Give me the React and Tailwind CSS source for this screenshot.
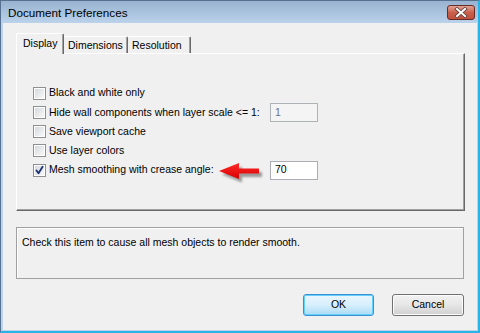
import React from "react";

function CheckBox({ checked }) {
  return (
    <div className="w-[13px] h-[13px] border border-[#8e8f8f] bg-white p-[1px] shrink-0">
      <div className="w-full h-full bg-gradient-to-br from-[#d5d9de] to-[#f8f8f8] relative">
        {checked && (
          <svg className="absolute left-[-1px] top-[-1px]" width="11" height="11" viewBox="0 0 11 11">
            <path d="M2.5 5.5 L4.5 8.2 L8.6 1.8" fill="none" stroke="#1b2f74" strokeWidth="1.8" strokeLinecap="round" strokeLinejoin="round" />
          </svg>
        )}
      </div>
    </div>
  );
}

function Row({ label, checked, input, disabled }) {
  return (
    <div className="h-[19.25px] flex items-center pl-[16px]">
      <CheckBox checked={checked} />
      <div className="ml-[3px] w-[221px] whitespace-nowrap">{label}</div>
      {input !== undefined && (
        <div
          className={
            disabled
              ? "w-[48px] h-[19px] border border-[#adb2b5] bg-[#f4f4f4] text-[#6d6d8a] pl-[4px] flex items-center"
              : "w-[48px] h-[19px] border border-[#abadb3] bg-white text-black pl-[4px] flex items-center"
          }
        >
          {input}
        </div>
      )}
    </div>
  );
}

export default function App() {
  return (
    <div className="w-[480px] h-[333px] bg-[#bcd3ea] border-t border-l border-[#56708f] border-r-2 border-b-2 border-r-[#2ab4e6] border-b-[#2ab4e6] flex flex-col overflow-hidden font-['Liberation_Sans',Arial,sans-serif] text-[10.5px] text-black">
      {/* Title bar */}
      <div className="h-[22px] shrink-0 bg-gradient-to-b from-[#98b2d0] to-[#bad2ea] flex items-center relative">
        <div className="pl-[7px] text-[11.7px] text-black pt-[1px]">Document Preferences</div>
        <div className="absolute left-[446px] top-[4px] w-[28px] h-[15px] rounded-[3px] border border-[#6a2a26] bg-gradient-to-b from-[#e2a293] via-[#c9604c] to-[#c0503c] flex items-center justify-center">
          <svg width="14" height="11" viewBox="0 0 14 11">
            <path d="M3 2 L11 9 M11 2 L3 9" stroke="#5a3b38" strokeWidth="3.6" strokeLinecap="square" />
            <path d="M3 2 L11 9 M11 2 L3 9" stroke="#ffffff" strokeWidth="2" strokeLinecap="square" />
          </svg>
        </div>
      </div>
      {/* Client */}
      <div className="flex-1 pl-[2px] pr-[1px] pb-[1px] flex">
        <div className="flex-1 bg-[#f0f0f0] flex flex-col">
          {/* Tabs */}
          <div className="mt-[10px] ml-[13px] h-[20px] flex items-end">
            <div className="relative z-10 -mb-px w-[48px] h-[21px] bg-[#f0f0f0] border-t border-l border-white border-r border-r-[#696969] rounded-t-[2px] shadow-[inset_-1px_0_0_#a0a0a0] pl-[6px] pt-[2px]">
              Display
            </div>
            <div className="w-[64px] h-[17px] bg-[#f0f0f0] border-t border-white border-r border-r-[#696969] rounded-t-[2px] shadow-[inset_-1px_0_0_#a0a0a0] pl-[4px] pt-[1px]">
              Dimensions
            </div>
            <div className="w-[63px] h-[17px] bg-[#f0f0f0] border-t border-white border-r border-r-[#696969] rounded-t-[2px] shadow-[inset_-1px_0_0_#a0a0a0] pl-[4px] pt-[1px]">
              Resolution
            </div>
          </div>
          {/* Panel */}
          <div className="relative ml-[13px] w-[449px] h-[158px] border-t border-l border-white border-r border-b border-r-[#696969] border-b-[#696969] shadow-[inset_-1px_-1px_0_#a0a0a0] pt-[29.5px]">
            <Row label="Black and white only" />
            <Row label="Hide wall components when layer scale <= 1:" input="1" disabled />
            <Row label="Save viewport cache" />
            <Row label="Use layer colors" />
            <Row label="Mesh smoothing with crease angle:" checked input="70" />
            <svg className="absolute left-[199px] top-[107px]" width="50" height="26" viewBox="0 0 50 26">
              <defs>
                <filter id="blur" x="-20%" y="-40%" width="140%" height="180%">
                  <feGaussianBlur stdDeviation="1.2" />
                </filter>
                <linearGradient id="red" x1="0" y1="0" x2="0" y2="1">
                  <stop offset="0" stopColor="#ff2a2a" />
                  <stop offset="1" stopColor="#d80000" />
                </linearGradient>
              </defs>
              <polygon points="4,11 24,3 24,8.5 44,8.5 44,13.5 24,13.5 24,19" fill="#555" opacity="0.55" filter="url(#blur)" transform="translate(2,2.5)" />
              <polygon points="3,10 23,2 23,7.5 43,7.5 43,12.5 23,12.5 23,18" fill="url(#red)" />
            </svg>
          </div>
          {/* Description */}
          <div className="mt-[16px] ml-[13px] w-[448px] h-[52px] border border-[#a0a0a0] shadow-[inset_1px_1px_0_#ffffff] pl-[5px] pt-[7px]">
            Check this item to cause all mesh objects to render smooth.
          </div>
          {/* Buttons */}
          <div className="mt-[15px] flex justify-end pr-[13px] gap-[18px]">
            <div className="w-[71px] h-[22px] rounded-[3px] border border-[#3c8fd0] shadow-[inset_0_0_0_1px_#62d1fb] bg-gradient-to-b from-[#eaf6fd] via-[#d7effc] to-[#a9dbf6] flex items-center justify-center">
              OK
            </div>
            <div className="w-[72px] h-[22px] rounded-[3px] border border-[#707070] shadow-[inset_0_0_0_1px_#fcfcfc] bg-gradient-to-b from-[#f2f2f2] via-[#e6e6e6] to-[#d0d0d0] flex items-center justify-center">
              Cancel
            </div>
          </div>
        </div>
      </div>
    </div>
  );
}
